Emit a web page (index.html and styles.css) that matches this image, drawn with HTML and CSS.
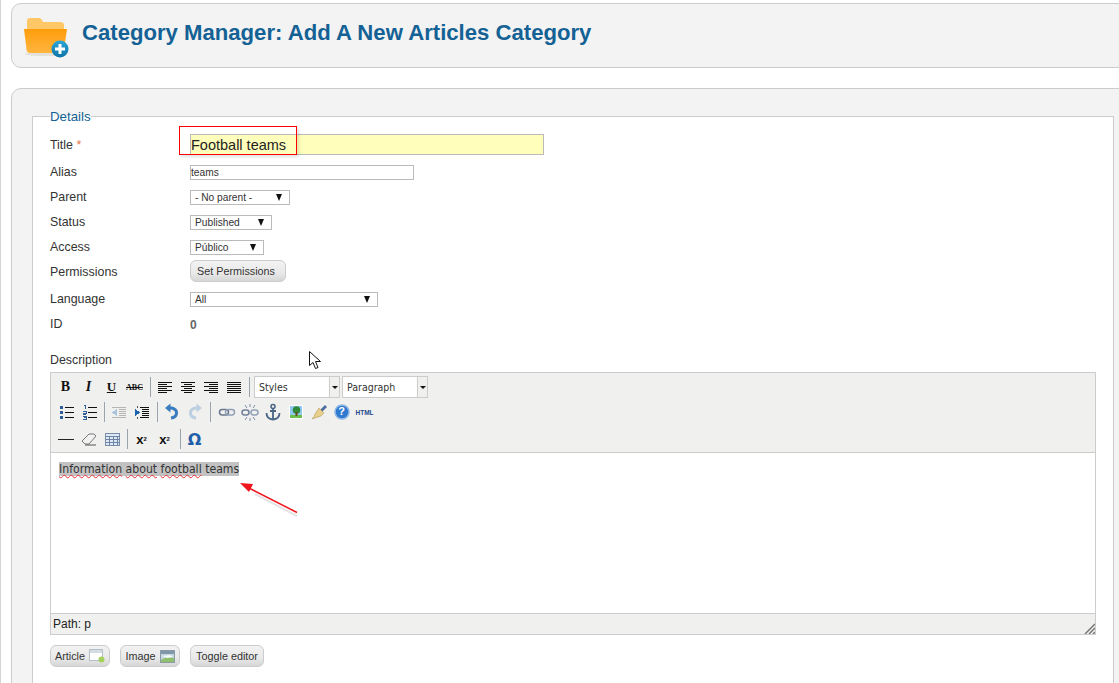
FILE: index.html
```html
<!DOCTYPE html>
<html lang="en">
<head>
<meta charset="utf-8">
<title>Category Manager</title>
<link rel="stylesheet" href="styles.css">
</head>
<body>
<div class="page">
  <header class="head">
    <svg class="folder" width="46" height="42" viewBox="0 0 46 42">
      <defs>
        <linearGradient id="fg" x1="0" y1="0" x2="0" y2="1"><stop offset="0" stop-color="#ff9d0c"/><stop offset="1" stop-color="#ffb53f"/></linearGradient>
        <linearGradient id="bg" x1="0" y1="0" x2="0" y2="1"><stop offset="0" stop-color="#2fa6d8"/><stop offset="1" stop-color="#0a74a8"/></linearGradient>
      </defs>
      <ellipse cx="22" cy="38" rx="20" ry="2" fill="#e4e0da"/>
      <path d="M4 5q0-3 3-3h9q2 0 3 2l1 2h17q4 0 4 3v6H4z" fill="#ffc766"/>
      <path d="M1 13h43l-3 21q-.4 3-3 3H7q-3 0-3.400-3z" fill="url(#fg)"/>
      <circle cx="37" cy="33" r="8.500" fill="url(#bg)"/>
      <path d="M35.500 28h3v3.500H42v3h-3.500V38h-3v-3.500H32v-3h3.500z" fill="#fff"/>
    </svg>
    <h1 class="head-title">Category Manager: Add A New Articles Category</h1>
  </header>

  <main class="panel">
    <fieldset class="details">
      <legend class="legend">Details</legend>

      <div class="row row-title">
        <span class="label">Title <em class="req">*</em></span>
        <input class="input input-title" value="Football teams">
      </div>
      <div class="row row-std">
        <span class="label">Alias</span>
        <input class="input input-alias" value="teams">
      </div>
      <div class="row row-std">
        <span class="label">Parent</span>
        <div class="select sel-parent"><span>- No parent -</span><i class="caret"></i></div>
      </div>
      <div class="row row-std">
        <span class="label">Status</span>
        <div class="select sel-status"><span>Published</span><i class="caret"></i></div>
      </div>
      <div class="row row-access">
        <span class="label">Access</span>
        <div class="select sel-access"><span>Público</span><i class="caret"></i></div>
      </div>
      <div class="row row-perm">
        <span class="label">Permissions</span>
        <button class="btn btn-perm" type="button">Set Permissions</button>
      </div>
      <div class="row row-std">
        <span class="label">Language</span>
        <div class="select sel-lang"><span>All</span><i class="caret"></i></div>
      </div>
      <div class="row row-id">
        <span class="label">ID</span>
        <b class="id-val">0</b>
      </div>
      <div class="desc">Description</div>

      <section class="editor">
        <div class="toolbar">
          <div class="tb-row">
            <span class="ti t-b">B</span>
            <span class="ti t-i">I</span>
            <span class="ti t-u">U</span>
            <span class="ti t-s">ABC</span>
            <span class="sep"></span>
            <span class="ti"><svg width="20" height="20" viewBox="0 0 20 20" class="ic"><path d="M3 5.500h14M3 7.500h9M3 9.500h14M3 11.500h9M3 13.500h14M3 15.500h9" stroke="#111"/></svg></span>
            <span class="ti"><svg width="20" height="20" viewBox="0 0 20 20" class="ic"><path d="M3 5.500h14M6 7.500h8M3 9.500h14M6 11.500h8M3 13.500h14M6 15.500h8" stroke="#111"/></svg></span>
            <span class="ti"><svg width="20" height="20" viewBox="0 0 20 20" class="ic"><path d="M3 5.500h14M8 7.500h9M3 9.500h14M8 11.500h9M3 13.500h14M8 15.500h9" stroke="#111"/></svg></span>
            <span class="ti"><svg width="20" height="20" viewBox="0 0 20 20" class="ic"><path d="M3 5.500h14M3 7.500h14M3 9.500h14M3 11.500h14M3 13.500h14M3 15.500h14" stroke="#111"/></svg></span>
            <span class="sep"></span>
            <div class="combo combo-styles"><span class="combo-text">Styles</span><span class="combo-btn"><i class="mini"></i></span></div>
            <div class="combo combo-para"><span class="combo-text">Paragraph</span><span class="combo-btn"><i class="mini"></i></span></div>
          </div>
          <div class="tb-row tb-row2">
            <span class="ti"><svg width="20" height="20" viewBox="0 0 20 20" class="ic"><path d="M9 5.500h9M9 10.500h9M9 15.500h9" stroke="#111"/><path d="M4 4h3v3H4zM4 9h3v3H4zM4 14h3v3H4z" fill="#2f5f9a"/></svg></span>
            <span class="ti"><svg width="20" height="20" viewBox="0 0 20 20" class="ic"><path d="M9 5.500h9M9 10.500h9M9 15.500h9" stroke="#111"/><path d="M5 3.500h1V7M4 9.500h3v1.500H4v1.500h3M4 14.500h3v1.200H5h2v1.800H4" stroke="#2f5f9a" fill="none"/></svg></span>
            <span class="sep"></span>
            <span class="ti"><svg width="20" height="20" viewBox="0 0 20 20" class="ic"><path d="M3 5.500h14M10 7.500h7M10 9.500h7M10 11.500h7M10 13.500h7M3 15.500h14" stroke="#b5b5b5"/><path d="M8 7v7L3 10.500z" fill="#a9c4dc"/></svg></span>
            <span class="ti"><svg width="20" height="20" viewBox="0 0 20 20" class="ic"><path d="M8 5.500h9M10 7.500h7M10 9.500h7M10 11.500h7M10 13.500h7M8 15.500h9" stroke="#111"/><path d="M3 7v7l5-3.500z" fill="#1c62b0"/><path d="M5.500 4v2M5.500 15v2" stroke="#555"/></svg></span>
            <span class="sep"></span>
            <span class="ti"><svg width="20" height="20" viewBox="0 0 20 20"><path d="M9 16q5-.5 5.500-4.500T10 6H7" stroke="#3a7cc0" stroke-width="3" fill="none"/><path d="M8.500 1.500v9L3 6z" fill="#3a7cc0"/></svg></span>
            <span class="ti"><svg width="20" height="20" viewBox="0 0 20 20"><path d="M11 16q-5-.5-5.500-4.500T10 6h3" stroke="#bcd0e2" stroke-width="3" fill="none"/><path d="M11.500 1.500v9L17 6z" fill="#bcd0e2"/></svg></span>
            <span class="sep sep-wide"></span>
            <span class="ti"><svg width="20" height="20" viewBox="0 0 20 20"><rect x="2.500" y="7.500" width="9" height="5.500" rx="2.700" fill="none" stroke="#69778e" stroke-width="1.500"/><rect x="8.500" y="7.500" width="9" height="5.500" rx="2.700" fill="none" stroke="#8fa0b8" stroke-width="1.500"/></svg></span>
            <span class="ti"><svg width="20" height="20" viewBox="0 0 20 20"><rect x="2" y="8" width="7" height="5" rx="2.400" fill="none" stroke="#6f7f98" stroke-width="1.500"/><rect x="11" y="8" width="7" height="5" rx="2.400" fill="none" stroke="#8fa0b8" stroke-width="1.500"/><path d="M10 2v3M10 16v3M5 3l2 3M15 3l-2 3M5 18l2-3M15 18l-2-3" stroke="#7f8fa6"/></svg></span>
            <span class="ti"><svg width="20" height="20" viewBox="0 0 20 20"><circle cx="10" cy="4.500" r="2" fill="none" stroke="#4a6585" stroke-width="1.500"/><path d="M10 6v11M7 9h6" stroke="#4a6585" stroke-width="1.800"/><path d="M3.500 11q0 6 6.500 6.500q6.500-.5 6.500-6.500" fill="none" stroke="#4a6585" stroke-width="1.800"/></svg></span>
            <span class="ti"><svg width="20" height="20" viewBox="0 0 20 20"><rect x="3" y="3" width="14" height="14" fill="#fff"/><rect x="4" y="4" width="12" height="9" fill="#8fc9ef"/><rect x="4" y="13" width="12" height="3" fill="#6cc04a"/><circle cx="10.500" cy="8" r="3.800" fill="#2f8a3a"/><rect x="9.500" y="10" width="2" height="4" fill="#6b4a1f"/></svg></span>
            <span class="ti"><svg width="20" height="20" viewBox="0 0 20 20"><path d="M11 8l5-5 2 2-5 5z" fill="#4e6f9e"/><path d="M10 6l5 5-3 3-9 3q3-3 3-5z" fill="#e8cf8c" stroke="#a98f4c" stroke-width=".5"/></svg></span>
            <span class="ti"><svg width="20" height="20" viewBox="0 0 20 20"><circle cx="10" cy="10" r="7" fill="#2f7ad0" stroke="#8fb8e6" stroke-width="1.500"/></svg><span class="q">?</span></span>
            <span class="ti t-html">HTML</span>
          </div>
          <div class="tb-row tb-row3">
            <span class="ti"><svg width="20" height="20" viewBox="0 0 20 20" class="ic"><path d="M2 10.500h16" stroke="#222"/></svg></span>
            <span class="ti"><svg width="20" height="20" viewBox="0 0 20 20"><path d="M3 12l7-7h5l2 2-7 8H6z" fill="#f2f2f2" stroke="#777"/><path d="M6 16h11" stroke="#555"/></svg></span>
            <span class="ti"><svg width="20" height="20" viewBox="0 0 20 20" class="ic"><rect x="3.500" y="4.500" width="14" height="12" fill="#dce8f5" stroke="#7b8da6"/><path d="M3.500 7.500h14M3.500 10.500h14M3.500 13.500h14M7.500 7.500v9M11.500 7.500v9M15 7.500v9" stroke="#6f84a0"/></svg></span>
            <span class="sep"></span>
            <span class="ti t-x">x<sub class="x-sub">2</sub></span>
            <span class="ti t-x">x<sup class="x-sup">2</sup></span>
            <span class="sep"></span>
            <span class="ti t-om">Ω</span>
          </div>
        </div>
        <div class="content"><span class="sel"><u class="typo">Information</u> <u class="typo">about</u> <u class="typo">football</u> teams</span></div>
        <div class="status">Path: p
          <svg class="grip" width="11" height="11" viewBox="0 0 11 11"><path d="M11 1L1 11M11 5l-6 6M11 9l-2 2" stroke="#777" stroke-width="1.500"/></svg>
        </div>
      </section>

      <div class="actions">
        <button class="btn btn-art" type="button">Article
          <svg width="16" height="14" viewBox="0 0 16 14"><rect x=".5" y=".5" width="13" height="11" fill="#fff" stroke="#b4bec8"/><rect x="1" y="1" width="12" height="3" fill="#d5dde4"/><circle cx="12.500" cy="10.500" r="3" fill="#a4d05c"/></svg>
        </button>
        <button class="btn btn-img" type="button">Image
          <svg width="15" height="13" viewBox="0 0 15 13"><rect x=".5" y=".5" width="14" height="12" fill="#c4d6e2" stroke="#8a9aa6"/><rect x="1" y="1" width="13" height="3" fill="#7f97a8"/><path d="M1 10l6-3 7 1v4H1z" fill="#8fbf6a"/><path d="M2 6l8-1 3 2-6 1z" fill="#f3f8fa"/></svg>
        </button>
        <button class="btn btn-tog" type="button">Toggle editor</button>
      </div>
    </fieldset>
  </main>

  <div class="callout"></div>
  <svg class="arrow" width="80" height="50" viewBox="0 0 80 50">
    <path d="M58 31L16 9" stroke="#aaa" stroke-width="2" opacity=".3" transform="translate(0 2)"/>
    <path d="M58 29.500L8 4" stroke="#f0141c" stroke-width="1.500"/>
    <path d="M1 0l13 1-4 8z" fill="#f0141c"/>
  </svg>
  <svg class="pointer" width="14" height="21" viewBox="0 0 14 21"><path d="M1.500 1.500v14l3.500-3 2.500 6 2.500-1-2.500-6h5z" fill="#fff" stroke="#111"/></svg>
</div>
</body>
</html>
```
FILE: styles.css
```css
html, body { margin: 0; padding: 0; height: 100%; background: #fff; overflow: hidden; }
.page { position: relative; height: 683px; overflow: hidden; padding-top: 3px; box-sizing: border-box; font-family: "Liberation Sans", Arial, sans-serif; font-size: 12.4px; color: #333; border-left: 1px solid #d4d4d4; }

.head { display: flex; align-items: center; height: 63px; margin: 0 -20px 0 10px; padding-left: 11px; background: #f3f3f3; border: 1px solid #ccc; border-radius: 10px; }
.folder { flex: none; margin-top: 2px; }
.head-title { margin: 0 0 6px 13px; font-size: 22.130px; font-weight: bold; color: #146295; }

.panel { margin: 20px -20px 0 10px; padding: 20px 24px 60px 20px; background: #f3f3f3; border: 1px solid #ccc; border-radius: 10px; }
.details { margin: 0; padding: 10px 18px 40px 17px; background: #fff; border: 1px solid #ccc; min-width: 0; }
.legend { margin-left: 0; padding: 0; font-size: 13.300px; line-height: 15px; color: #146295; }

.row { display: flex; align-items: center; }
.row-title { height: 21px; margin-bottom: 10px; }
.row-std { height: 15px; margin-bottom: 10px; }
.row-access { height: 15px; margin-bottom: 5px; }
.row-perm { height: 22px; margin-bottom: 10px; }
.row-id { height: 15px; margin-bottom: 20px; }
.label { flex: none; width: 140px; color: #333; }
.row-std .label, .row-access .label, .row-id .label { margin-bottom: 2px; }
.row-perm .label { margin-top: 2px; }
.req { font-style: normal; color: #e8794a; }
.desc { height: 15px; line-height: 17px; margin-bottom: 5px; }
.id-val { font-size: 12px; color: #666; }

.input { box-sizing: border-box; margin: 0; border: 1px solid #bbb; background: #fff; font-family: "Liberation Sans", Arial, sans-serif; padding: 0; color: #333; }
.input-title { width: 354px; height: 21px; font-size: 14.500px; background: #ffffbb; color: #222; }
.input-alias { width: 224px; height: 15px; font-size: 10.200px; }

.select { box-sizing: border-box; display: flex; align-items: center; justify-content: space-between; height: 15px; padding: 0 7px 0 4px; border: 1px solid #bbb; background: #fff; font-size: 10.200px; }
.caret { width: 0; height: 0; border: 3.500px solid transparent; border-top: 7px solid #111; border-bottom: 0; }
.sel-parent { width: 100px; }
.sel-status { width: 82px; }
.sel-access { width: 74px; }
.sel-lang { width: 188px; }

.btn { box-sizing: border-box; display: inline-flex; align-items: center; justify-content: center; gap: 4px; height: 22px; padding: 0; border: 1px solid #ccc; border-radius: 6px; background: linear-gradient(#f2f2f2, #e9e9e9 60%, #d6d6d6); font-family: "Liberation Sans", Arial, sans-serif; font-size: 10.800px; color: #333; }
.btn-perm { width: 96px; padding-right: 4px; }
.btn-art { width: 60px; }
.btn-img { width: 60px; }
.btn-tog { width: 74px; }

.editor { box-sizing: border-box; width: 1046px; height: 263px; display: flex; flex-direction: column; border: 1px solid #ccc; }
.toolbar { flex: none; height: 79px; padding-left: 3px; background: #f0f0ee; border-bottom: 1px solid #ccc; box-sizing: content-box; }
.tb-row { display: flex; align-items: center; height: 22px; padding-top: 3px; }
.tb-row2 { height: 26px; padding-top: 1px; }
.tb-row3 { height: 26px; padding-top: 1px; }
.ti { position: relative; flex: none; display: flex; align-items: center; justify-content: center; width: 23px; height: 20px; color: #111; }
.ic { shape-rendering: crispEdges; }
.sep { flex: none; width: 7px; height: 20px; background: linear-gradient(#9aa3ae, #9aa3ae) no-repeat 4px 0 / 1px 100%; }
.sep-wide { width: 9px; }
.t-b { font: bold 14px "Liberation Serif", serif; }
.t-i { font: italic bold 14px "Liberation Serif", serif; }
.t-u { font: bold 13px "Liberation Serif", serif; text-decoration: underline; }
.t-s { font: bold 8px "Liberation Serif", serif; text-decoration: line-through; }
.t-html { font: bold 6.500px "Liberation Sans", sans-serif; color: #1f4a8c; }
.t-x { font: bold 13px "Liberation Sans", sans-serif; color: #111; }
.x-sub, .x-sup { font-size: 6px; color: #111; line-height: 0; }
.t-om { font: bold 16px "DejaVu Sans", sans-serif; color: #1f5fa8; }
.q { position: absolute; left: 0; right: 0; top: 3px; text-align: center; font: bold 11px "Liberation Sans", sans-serif; color: #fff; }

.combo { box-sizing: border-box; flex: none; display: flex; height: 22px; margin-right: 2px; border: 1px solid #ccc; background: #fff; font-family: "DejaVu Sans", sans-serif; font-stretch: condensed; font-size: 10.500px; color: #333; }
.combo-styles { width: 86px; margin-left: 2px; }
.combo-para { width: 86px; }
.combo-text { flex: 1; padding-left: 4px; line-height: 20px; }
.combo-btn { flex: none; width: 9px; display: flex; align-items: center; justify-content: center; background: #f0f0ee; border-left: 1px solid #ccc; }
.mini { width: 0; height: 0; border: 3px solid transparent; border-top: 3px solid #111; border-bottom: 0; }

.content { flex: 1; padding: 9px 8px 0; font-family: "DejaVu Sans", sans-serif; font-stretch: condensed; font-size: 12.130px; line-height: 15px; color: #333; background: #fff; }
.sel { background: #c2c2c2; }
.typo { text-decoration: underline wavy #e8303a 1px; text-underline-offset: 1px; }
.status { position: relative; flex: none; height: 20px; padding-left: 2px; line-height: 20px; border-top: 1px solid #ccc; background: #f0f0ee; font-size: 12px; color: #222; }
.grip { position: absolute; right: 0; bottom: 0; }

.actions { display: flex; gap: 10px; margin-top: 10px; }

.callout { position: absolute; left: 178px; top: 126px; width: 116px; height: 27px; border: 1px solid #f00; box-shadow: 2px 2px 3px rgba(0,0,0,.12); }
.arrow { position: absolute; left: 238px; top: 483px; }
.pointer { position: absolute; left: 307px; top: 350px; }
```
